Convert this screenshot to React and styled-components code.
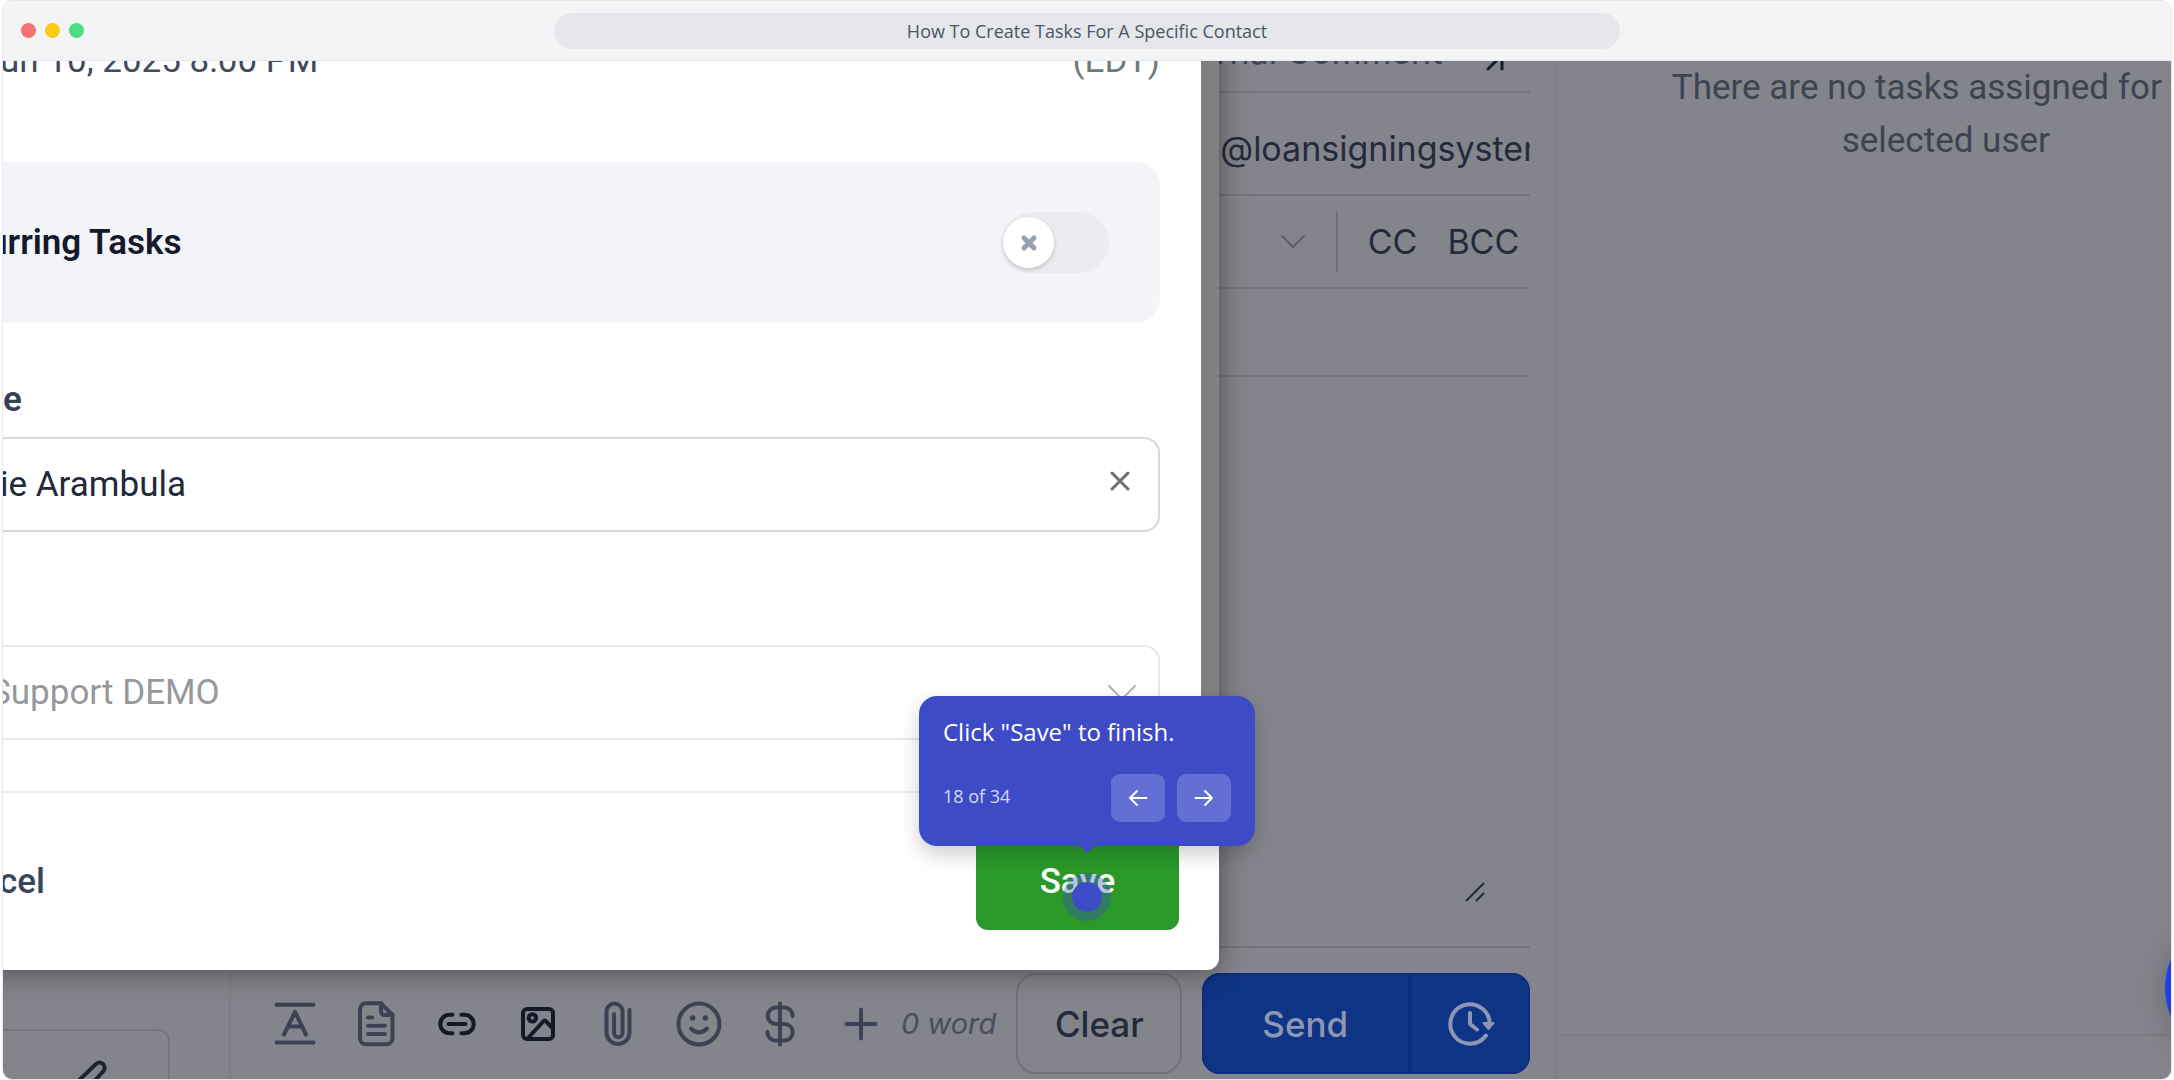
import React from 'react';
import styled, { createGlobalStyle } from 'styled-components';

const colors = {
  frame: '#e5e7eb',
  chrome: '#f3f4f6',
  dimmed: '#84848c',
  dimmedLine: '#75757d',
  dimmedEdge: '#7e7e86',
  dimmedText: '#242a3b',
  dimmedMuted: '#3d4350',
  guide: '#3d4bc7',
  save: '#2a992a',
};

const fonts = {
  chrome: '"Open Sans", "Noto Sans", sans-serif',
  app: 'Roboto, "Liberation Sans", sans-serif',
  mail: 'Inter, "Liberation Sans", sans-serif',
};

const GlobalStyle = createGlobalStyle`
  * {
    box-sizing: border-box;
  }

  body {
    margin: 0;
    background: #ffffff;
  }

  button,
  input,
  select,
  textarea {
    margin: 0;
    padding: 0;
    border: none;
    background: none;
    font: inherit;
    color: inherit;
    outline: none;
  }

  button {
    cursor: pointer;
  }
`;

/* Browser frame */

const Frame = styled.div`
  display: flex;
  flex-direction: column;
  height: 100vh;
  margin: 0 2px;
  overflow: hidden;
  border: 1px solid ${colors.frame};
  border-radius: 10px;
`;

const Chrome = styled.header`
  display: grid;
  grid-template-columns: 1fr 2fr 1fr;
  align-items: center;
  flex: none;
  height: 60px;
  padding: 0 18px;
  background: ${colors.chrome};
  border-bottom: 1px solid ${colors.frame};
`;

const Dots = styled.div`
  display: flex;
  gap: 9px;
`;

const Dot = styled.span`
  width: 15px;
  height: 15px;
  border-radius: 50%;
  background: ${props => props.$color};
`;

const AddressBar = styled.div`
  height: 36px;
  border-radius: 18px;
  background: ${colors.frame};
  color: #4b5563;
  font-family: ${fonts.chrome};
  font-size: 18px;
  line-height: 36px;
  text-align: center;
`;

const Stage = styled.main`
  position: relative;
  display: flex;
  flex: 1;
  min-height: 0;
  overflow: hidden;
  background: ${colors.dimmed};
  font-family: ${fonts.app};
  font-size: 35px;
`;

/* Dimmed page */

const Sidebar = styled.aside`
  display: flex;
  flex-direction: column;
  justify-content: flex-end;
  flex: none;
  width: 228px;
  border-right: 2px solid ${colors.dimmedEdge};
`;

const SidebarCard = styled.div`
  display: flex;
  justify-content: flex-end;
  width: 167px;
  height: 50px;
  padding: 28px 60px 0 0;
  overflow: hidden;
  border-top: 2px solid ${colors.dimmedLine};
  border-right: 2px solid ${colors.dimmedLine};
  border-top-right-radius: 12px;
  color: #1e2333;
`;

const Composer = styled.section`
  display: flex;
  flex-direction: column;
  justify-content: flex-end;
  flex: 1;
  min-width: 0;
  padding-right: 25px;
  color: ${colors.dimmedText};
  font-family: ${fonts.mail};
  font-size: 34px;
`;

const ComposerRow = styled.div`
  display: flex;
  align-items: center;
  justify-content: flex-end;
  flex: none;
  height: ${props => props.$height};
  border-bottom: 2px solid ${colors.dimmedLine};
`;

const TabRow = styled(ComposerRow)`
  gap: 36px;
  padding-right: 18px;
  color: ${colors.dimmedMuted};
`;

const TabIcon = styled.span`
  display: flex;
  align-self: flex-end;
  padding-bottom: 12px;
  color: #171c2b;
`;

const Sender = styled.span`
  width: 310px;
  padding-top: 10px;
  overflow: hidden;
  white-space: nowrap;
`;

const CopyRow = styled(ComposerRow)`
  gap: 30px;
  padding-right: 11px;
`;

const Divider = styled.span`
  width: 2px;
  height: 60px;
  background: #6d6d75;
`;

const MessageBox = styled.div`
  position: relative;
  display: flex;
  flex: none;
  height: 571px;
  border-bottom: 2px solid ${colors.dimmedLine};
`;

const Message = styled.textarea`
  flex: 1;
  resize: none;
`;

const ResizeGrip = styled.span`
  position: absolute;
  right: 45px;
  bottom: 44px;
  display: flex;
`;

const ComposerBar = styled.div`
  display: flex;
  align-items: center;
  gap: 20px;
  flex: none;
  height: 131px;
  padding: 25px 0 5px 24px;
`;

const BarTools = styled.div`
  display: grid;
  grid-template-columns: repeat(8, 1fr);
  flex: 1;
  margin-right: -20px;
`;

const ToolButton = styled.button`
  display: flex;
  justify-content: center;
  color: ${props => (props.$strong ? '#151a2a' : '#3c4254')};
`;

const WordCount = styled.span`
  color: #484d5a;
  font-size: 29px;
  font-style: italic;
  white-space: nowrap;
`;

const ClearButton = styled.button`
  width: 166px;
  height: 100%;
  border: 2px solid #71717a;
  border-radius: 20px;
  font-size: 35px;
  font-weight: 500;
`;

const SendGroup = styled.div`
  display: flex;
  width: 328px;
  height: 100%;
  overflow: hidden;
  border-radius: 18px;
  background: #103485;
  box-shadow: inset 0 0 0 2px #0c2e80;
`;

const SendButton = styled.button`
  flex: 1;
  border-right: 4px solid #092c86;
  color: #8d96b2;
  font-size: 35px;
  font-weight: 500;
`;

const ScheduleButton = styled.button`
  display: flex;
  align-items: center;
  justify-content: center;
  width: 118px;
  color: #8d96b2;
`;

const TaskPanel = styled.aside`
  display: flex;
  flex-direction: column;
  justify-content: space-between;
  flex: none;
  width: 28.4%;
  border-left: 2px solid ${colors.dimmedEdge};
`;

const EmptyText = styled.p`
  width: 777px;
  margin: 0;
  color: ${colors.dimmedMuted};
  line-height: 53px;
  text-align: center;
`;

const PanelFooter = styled.div`
  height: 45px;
  border-top: 2px solid ${colors.dimmedEdge};
`;

const ChatBubble = styled.button`
  position: absolute;
  right: -138px;
  bottom: 19px;
  width: 144px;
  height: 144px;
  border-radius: 50%;
  background: #2340e6;
  box-shadow: 0 4px 32px rgba(0, 0, 0, 0.2);
`;

/* Task dialog */

const Dialog = styled.form`
  position: absolute;
  top: -40px;
  bottom: 109px;
  left: -80px;
  display: flex;
  flex-direction: column;
  width: 1296px;
  border-radius: 12px;
  background: #ffffff;
  box-shadow: 0 2px 28px rgba(0, 0, 0, 0.42);
`;

const DialogScroll = styled.div`
  display: flex;
  flex: 1;
  min-height: 0;
`;

const DialogBody = styled.div`
  display: flex;
  flex-direction: column;
  justify-content: flex-end;
  flex: 1;
  padding: 0 41px 51px 40px;
`;

const ScrollTrack = styled.div`
  width: 18px;
  background: #808080;
`;

const DateRow = styled.div`
  display: flex;
  justify-content: space-between;
  margin-bottom: 80px;
  padding-left: 37px;
  color: #434a59;
  line-height: 42px;
`;

const Zone = styled.span`
  color: #6f7a7b;
`;

const RecurringCard = styled.div`
  display: flex;
  align-items: center;
  justify-content: space-between;
  flex: none;
  height: 161px;
  margin-bottom: 56px;
  padding: 0 51px 0 25px;
  border-radius: 24px;
  background: #f3f4f8;
`;

const RecurringLabel = styled.label`
  color: #14192c;
  font-weight: 600;
`;

const Switch = styled.span`
  position: relative;
  display: flex;
`;

const SwitchInput = styled.input`
  width: 107px;
  height: 61px;
  appearance: none;
  border-radius: 31px;
  background: #ebecef;
`;

const Knob = styled.span`
  position: absolute;
  top: 5px;
  left: 1px;
  display: flex;
  align-items: center;
  justify-content: center;
  width: 51px;
  height: 51px;
  border-radius: 50%;
  background: #ffffff;
  box-shadow: 0 2px 5px rgba(0, 0, 0, 0.18);
  pointer-events: none;
`;

const FieldLabel = styled.label`
  margin-bottom: 16px;
  padding-left: 40px;
  color: #374155;
  font-weight: 600;
  line-height: 42px;
`;

const Field = styled.div`
  display: flex;
  align-items: center;
  flex: none;
  height: 95px;
  margin-bottom: 113px;
  padding: 0 28px 1px 35px;
  border: 2px solid #d5d9d9;
  border-radius: 16px;
  color: #222938;
`;

const DisabledField = styled(Field)`
  margin-bottom: 0;
  padding: 0 21px 0 25px;
  border-color: #e8e8e9;
  color: #97989b;
`;

const FieldInput = styled.input`
  flex: 1;
  min-width: 0;
`;

const FieldSelect = styled.select`
  flex: 1;
  min-width: 0;
  appearance: none;
`;

const Chevron = styled.span`
  display: flex;
  color: ${props => props.$color};
`;

const IconButton = styled.button`
  display: flex;
  padding-bottom: 6px;
  color: #66706f;
`;

const DialogFooter = styled.div`
  display: flex;
  align-items: center;
  justify-content: space-between;
  flex: none;
  height: 179px;
  padding: 0 40px 0 76px;
  border-top: 2px solid #ececec;
`;

const CancelButton = styled.button`
  color: #3a4558;
  font-weight: 500;
`;

const SaveButton = styled.button`
  width: 203px;
  height: 96px;
  border-radius: 12px;
  background: ${colors.save};
  color: #ffffff;
  font-weight: 500;
`;

/* Guide */

const Guide = styled.div`
  position: absolute;
  bottom: 233px;
  left: 50%;
  width: 336px;
  padding: 19px 24px 24px;
  transform: translateX(-50%);
  border-radius: 18px;
  background: ${colors.guide};
  box-shadow: 0 8px 20px rgba(0, 0, 0, 0.2);
  color: #ffffff;
  font-family: ${fonts.chrome};

  &::after {
    content: '';
    position: absolute;
    bottom: -7px;
    left: 50%;
    border: 7px solid transparent;
    border-top-color: ${colors.guide};
    border-bottom: none;
    transform: translateX(-50%);
  }
`;

const GuideText = styled.p`
  margin: 0 0 25px;
  font-size: 24px;
  line-height: 34px;
`;

const GuideNav = styled.div`
  display: flex;
  align-items: center;
  gap: 12px;
`;

const GuideStep = styled.span`
  flex: 1;
  padding-bottom: 4px;
  color: rgba(255, 255, 255, 0.8);
  font-size: 18px;
`;

const GuideButton = styled.button`
  display: flex;
  align-items: center;
  justify-content: center;
  width: 54px;
  height: 48px;
  border-radius: 9px;
  background: rgba(255, 255, 255, 0.2);
`;

const Pulse = styled.span`
  position: absolute;
  bottom: 158px;
  left: 50%;
  display: flex;
  align-items: center;
  justify-content: center;
  width: 48px;
  height: 48px;
  transform: translateX(-50%);
  border-radius: 50%;
  background: rgba(61, 75, 199, 0.35);

  &::before {
    content: '';
    width: 30px;
    height: 30px;
    border-radius: 50%;
    background: ${colors.guide};
  }
`;

const Icon = ({ width = 46, height = 46, stroke = 4, children }) => (
  <svg
    width={width}
    height={height}
    viewBox={`0 0 ${width} ${height}`}
    fill="none"
    stroke="currentColor"
    strokeWidth={stroke}
    strokeLinecap="round"
    strokeLinejoin="round"
    aria-hidden="true"
  >
    {children}
  </svg>
);

const tools = [
  {
    name: 'Text style',
    shape: <path d="M4.5 3.8h37M4.5 41.5h37M12 33.5 23 11l11 22.5M16 25.5h14" />,
  },
  {
    name: 'Template',
    shape: (
      <>
        <path d="M28 2.3H13a6 6 0 0 0-6 6v29a6 6 0 0 0 6 6h20.500a6 6 0 0 0 6-6V14z" />
        <path d="M28 2.3v8.2a3.5 3.5 0 0 0 3.5 3.5h8M15 16.5h4M15 24.7h17M15 33h17" />
      </>
    ),
  },
  {
    name: 'Link',
    strong: true,
    shape: <path d="M18.5 13.8h-3a9.2 9.2 0 0 0 0 18.4h3M27.5 13.8h3a9.2 9.2 0 0 1 0 18.4h-3M14.5 23h17" />,
  },
  {
    name: 'Image',
    strong: true,
    shape: (
      <>
        <rect x="8" y="8" width="30" height="30" rx="4" />
        <circle cx="17.4" cy="16.9" r="3.7" />
        <path d="M13.5 36.5 28.7 20a1.500 1.500 0 0 1 2 0l7.300 7.500" />
      </>
    ),
  },
  {
    name: 'Attachment',
    shape: <path d="M34.5 9v22.5a11.500 11.500 0 0 1-23 0v-21a8 8 0 0 1 16 0V32a4.200 4.200 0 0 1-8.400 0V13" />,
  },
  {
    name: 'Emoji',
    shape: (
      <>
        <circle cx="23" cy="23" r="20.5" />
        <path d="M15 27.5q8 8 16 0" />
        <circle cx="16.6" cy="17" r="2.8" fill="currentColor" stroke="none" />
        <circle cx="29.4" cy="17" r="2.8" fill="currentColor" stroke="none" />
      </>
    ),
  },
  {
    name: 'Payment',
    shape: <path d="M23 2.5v41M35.500 15v-.5a8 8 0 0 0-8-8H19a8.200 8.200 0 0 0 0 16.500h8.500a8.200 8.200 0 0 1 0 16.500h-9a8 8 0 0 1-8-8V31" />,
  },
  { name: 'More', shape: <path d="M23 8.5v29M8.5 23h29" /> },
];

const App = () => (
  <>
    <GlobalStyle />
    <Frame>
      <Chrome>
        <Dots>
          <Dot $color="#f87171" />
          <Dot $color="#facc15" />
          <Dot $color="#4ade80" />
        </Dots>
        <AddressBar>How To Create Tasks For A Specific Contact</AddressBar>
      </Chrome>

      <Stage>
        <Sidebar>
          <SidebarCard>
            <Icon width={48} height={48}>
              <path d="M7 33 35.500 5.500a5 5 0 0 1 8 6.500L18 40 5 44z" />
            </Icon>
          </SidebarCard>
        </Sidebar>

        <Composer>
          <TabRow $height="82px">
            <span>rnal Comment</span>
            <TabIcon>
              <Icon width={34} height={34} stroke={3}>
                <path d="M10 10h14v14M10 24 24 10" />
              </Icon>
            </TabIcon>
          </TabRow>
          <ComposerRow $height="103px">
            <Sender>@loansigningsystem</Sender>
          </ComposerRow>
          <CopyRow $height="93px">
            <Chevron $color="#5c5e68">
              <Icon width={26} height={16} stroke={2}>
                <path d="m2 2 11 11L24 2" />
              </Icon>
            </Chevron>
            <Divider />
            <button type="button">CC</button>
            <button type="button">BCC</button>
          </CopyRow>
          <ComposerRow $height="88px" />
          <MessageBox>
            <Message aria-label="Message" />
            <ResizeGrip>
              <Icon width={20} height={20} stroke={2}>
                <path d="m1.500 18.500 17-17M11.500 18.500l7-7" />
              </Icon>
            </ResizeGrip>
          </MessageBox>
          <ComposerBar>
            <BarTools>
              {tools.map(tool => (
                <ToolButton key={tool.name} type="button" aria-label={tool.name} $strong={tool.strong}>
                  <Icon>{tool.shape}</Icon>
                </ToolButton>
              ))}
            </BarTools>
            <WordCount>0 word</WordCount>
            <ClearButton type="button">Clear</ClearButton>
            <SendGroup>
              <SendButton type="button">Send</SendButton>
              <ScheduleButton type="button" aria-label="Schedule">
                <Icon width={48}>
                  <path d="M39 34.5A19.700 19.700 0 1 1 42.700 22M23 12v11l7 5.500" />
                  <path d="M36.5 22h10l-5 6z" fill="currentColor" strokeWidth={2} />
                </Icon>
              </ScheduleButton>
            </SendGroup>
          </ComposerBar>
        </Composer>

        <TaskPanel>
          <EmptyText>
            There are no tasks assigned for the
            <br />
            selected user
          </EmptyText>
          <PanelFooter />
        </TaskPanel>

        <ChatBubble type="button" aria-label="Chat" />

        <Dialog onSubmit={e => e.preventDefault()}>
          <DialogScroll>
            <DialogBody>
              <DateRow>
                <span>un 10, 2025 8:00 PM</span>
                <Zone>(EDT)</Zone>
              </DateRow>
              <RecurringCard>
                <RecurringLabel htmlFor="recurring">urring Tasks</RecurringLabel>
                <Switch>
                  <SwitchInput id="recurring" type="checkbox" />
                  <Knob>
                    <Icon width={18} height={18} stroke={5}>
                      <path d="m4 4 10 10M14 4 4 14" stroke="#98a1b0" />
                    </Icon>
                  </Knob>
                </Switch>
              </RecurringCard>
              <FieldLabel htmlFor="assignee">e</FieldLabel>
              <Field>
                <FieldInput id="assignee" type="text" defaultValue="ie Arambula" />
                <IconButton type="button" aria-label="Clear field">
                  <Icon width={20} height={20} stroke={3}>
                    <path d="m2 2 16 16M18 2 2 18" />
                  </Icon>
                </IconButton>
              </Field>
              <DisabledField>
                <FieldSelect aria-label="Contact" defaultValue="demo">
                  <option value="demo">Support DEMO</option>
                </FieldSelect>
                <Chevron $color="#b4b5b7">
                  <Icon width={30} height={18} stroke={2}>
                    <path d="m2 2 13 13L28 2" />
                  </Icon>
                </Chevron>
              </DisabledField>
            </DialogBody>
            <ScrollTrack />
          </DialogScroll>
          <DialogFooter>
            <CancelButton type="button">cel</CancelButton>
            <SaveButton type="submit">Save</SaveButton>
          </DialogFooter>
        </Dialog>

        <Guide>
          <GuideText>Click "Save" to finish.</GuideText>
          <GuideNav>
            <GuideStep>18 of 34</GuideStep>
            <GuideButton type="button" aria-label="Previous step">
              <Icon width={20} height={18} stroke={2}>
                <path d="M18.500 9H2M9 2 2 9l7 7" />
              </Icon>
            </GuideButton>
            <GuideButton type="button" aria-label="Next step">
              <Icon width={20} height={18} stroke={2}>
                <path d="M1.500 9H18M11 2l7 7-7 7" />
              </Icon>
            </GuideButton>
          </GuideNav>
        </Guide>
        <Pulse />
      </Stage>
    </Frame>
  </>
);

export default App;
